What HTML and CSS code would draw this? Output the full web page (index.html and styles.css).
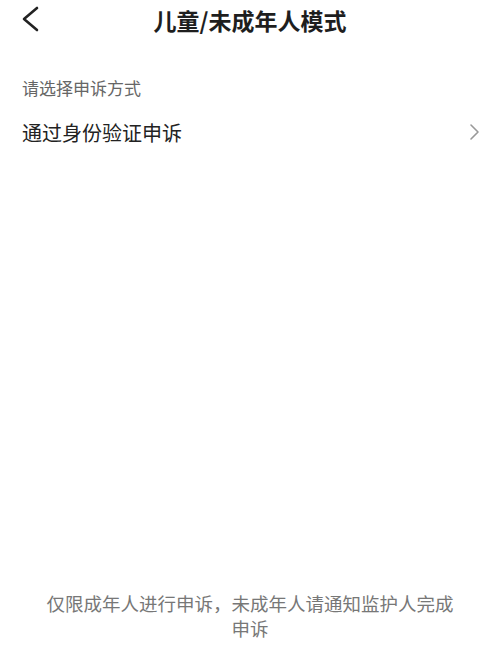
FILE: index.html
```
<!DOCTYPE html>
<html lang="zh-CN">
<head>
    <meta charset="UTF-8">
    <meta name="viewport" content="width=device-width, initial-scale=1.0">
    <title>儿童/未成年人模式</title>
    <link rel="stylesheet" href="styles.css">
</head>
<body>
    <div class="page">
        <div class="header">
            <a class="back" href="#">
                <svg width="22" height="28" viewBox="0 0 22 28"><path d="M17 3 L4 14 L17 25" fill="none" stroke="#222" stroke-width="2.6" stroke-linecap="round" stroke-linejoin="round"/></svg>
            </a>
            <h1>儿童/未成年人模式</h1>
        </div>

        <div class="content">
            <p class="label">请选择申诉方式</p>
            <a class="item" href="#">
                <span>通过身份验证申诉</span>
                <svg width="12" height="18" viewBox="0 0 12 18"><path d="M3 2 L10 9 L3 16" fill="none" stroke="#999" stroke-width="1.6" stroke-linecap="round" stroke-linejoin="round"/></svg>
            </a>
        </div>

        <div class="footer">
            仅限成年人进行申诉，未成年人请通知监护人完成申诉
        </div>
    </div>
</body>
</html>
```
FILE: styles.css
```
* {
    margin: 0;
    padding: 0;
    box-sizing: border-box;
}

body {
    font-family: "Noto Sans CJK SC", "Noto Sans", sans-serif;
    background: #fff;
    color: #222;
}

.page {
    min-height: 100vh;
    display: flex;
    flex-direction: column;
}

.header {
    position: relative;
    height: 40px;
    display: flex;
    align-items: center;
    justify-content: center;
}

.header h1 {
    font-size: 23px;
    font-weight: 700;
    line-height: 40px;
    color: #1e1e1e;
}

.back {
    position: absolute;
    left: 20px;
    top: 5px;
    display: block;
    height: 28px;
}

.content {
    padding: 0 22px;
}

.label {
    margin-top: 36px;
    font-size: 17px;
    line-height: 24px;
    color: #666;
}

.item {
    display: flex;
    align-items: center;
    justify-content: space-between;
    margin-top: 10px;
    height: 44px;
    font-size: 20px;
    color: #222;
    text-decoration: none;
    margin-right: -2px;
}

.footer {
    margin-top: auto;
    padding: 0 44px 16px;
    font-size: 18.5px;
    line-height: 25px;
    text-align: center;
    color: #777;
}
```
